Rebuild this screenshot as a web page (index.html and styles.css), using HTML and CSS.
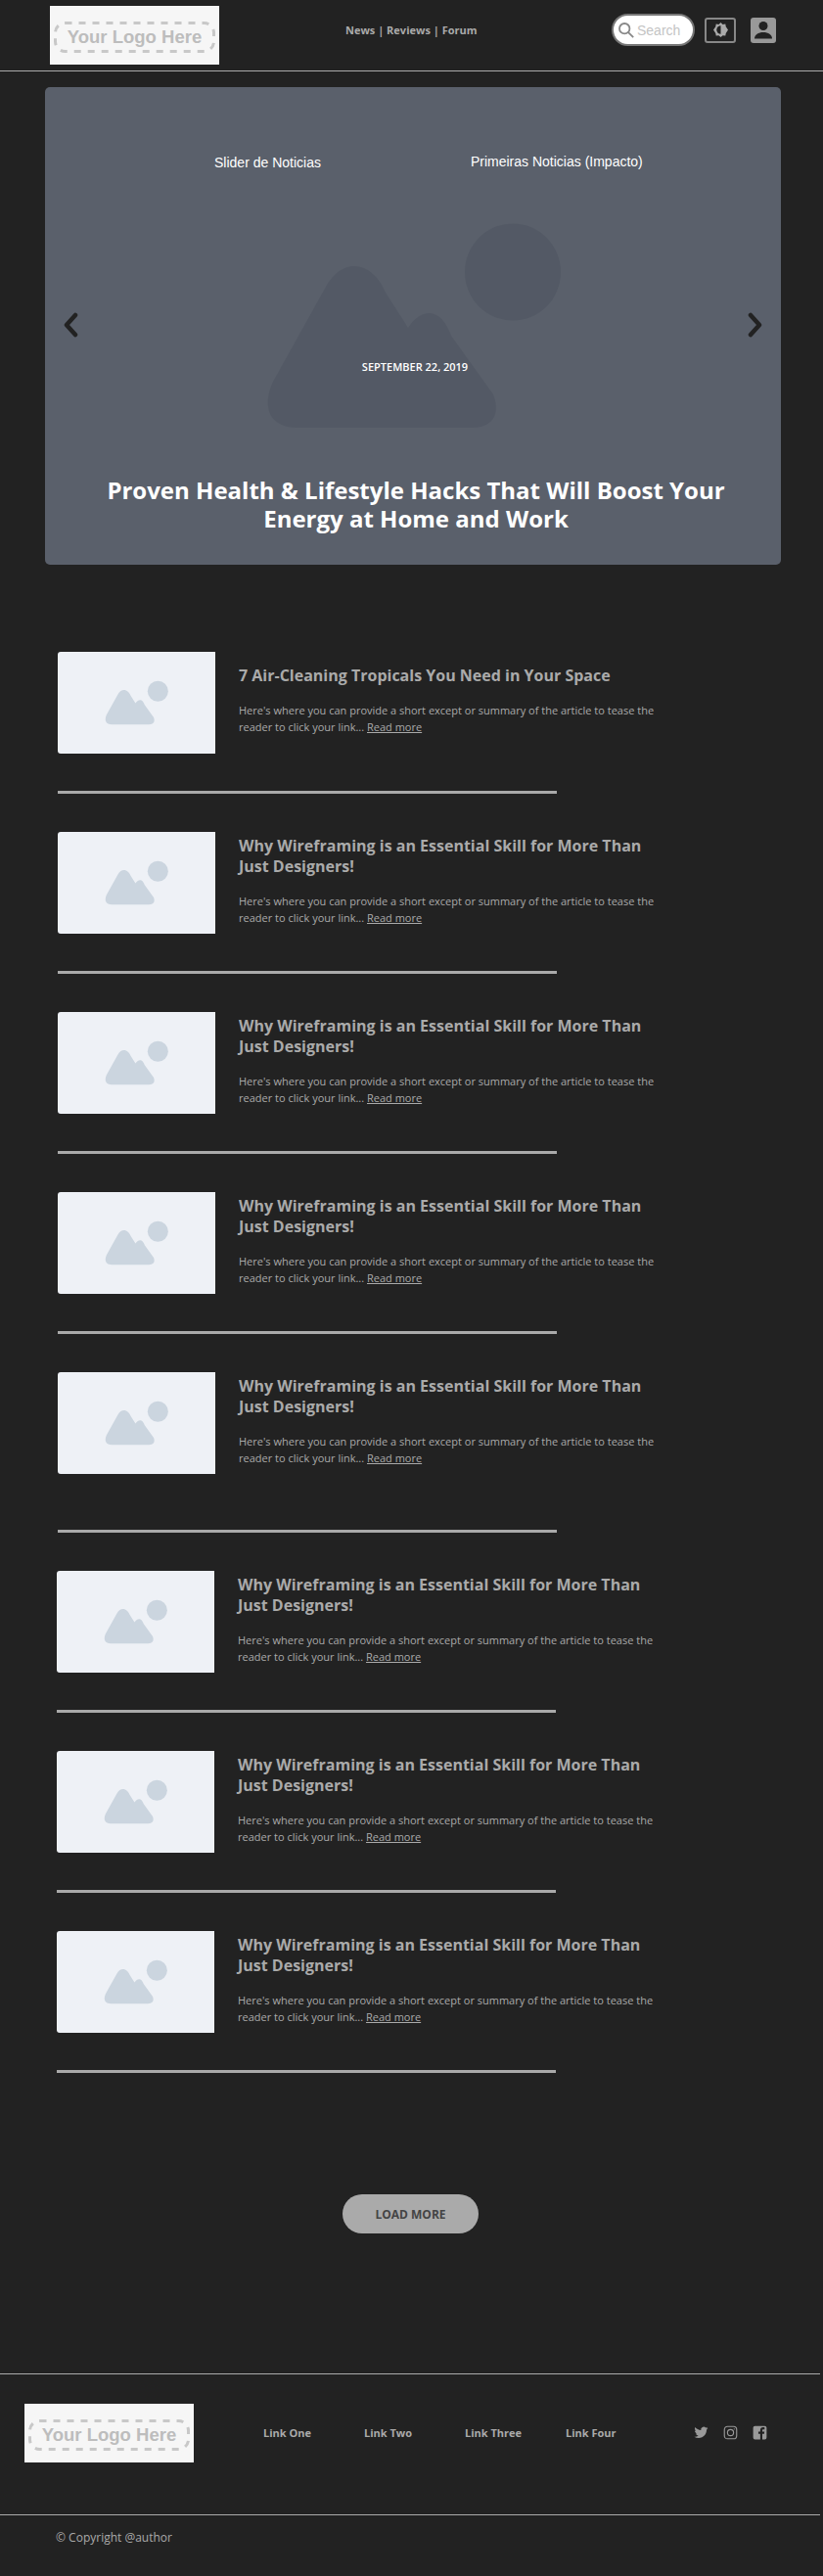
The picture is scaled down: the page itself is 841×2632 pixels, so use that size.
FILE: index.html
```html
<!DOCTYPE html>
<html lang="en">
<head>
    <meta charset="UTF-8">
    <meta name="viewport" content="width=device-width, initial-scale=1.0">
    <title>News</title>
    <link rel="stylesheet" href="styles.css">
</head>
<body>
    <svg class="defs">
        <symbol id="placeholder" viewBox="0 0 752 488" preserveAspectRatio="none">
            <ellipse cx="478" cy="189" rx="49" ry="49.5"></ellipse>
            <path d="M233 301L287 204C295 190 305 183 316 183C330 183 342 195 348 210L371 246C377 237 384 231 393 231C402 231 410 240 415 254L458 314C464 330 462 348 435 348L258 348C232 348 220 330 233 301Z"></path>
        </symbol>
        <symbol id="dashes" viewBox="0 0 165 32">
            <rect x="1.5" y="1.5" width="162" height="29" rx="10"></rect>
        </symbol>
    </svg>

    <header class="header">
        <div class="logo header-logo"><span class="logo-mark"><svg class="logo-dashes"><use href="#dashes"></use></svg>Your Logo Here</span></div>
        <nav class="nav"><a href="#">News</a> | <a href="#">Reviews</a> | <a href="#">Forum</a></nav>
        <div class="header-tools">
            <label class="search">
                <svg class="search-icon" viewBox="0 0 20 20"><circle cx="8" cy="8" r="5.8"></circle><path d="M12.3 12.3L18 18"></path></svg>
                <input type="text" placeholder="Search">
            </label>
            <button class="tool contrast" type="button">
                <svg viewBox="0 0 16 16"><path d="M8 0l2.2 2 2.9-.4.5 2.800L16 8l-2.400 3.600-.5 2.800-2.900-.4L8 16l-2.200-2-2.900.4-.5-2.800L0 8l2.400-3.600.5-2.800 2.900.4z"></path><path class="half" d="M8 3.500a4.500 4.500 0 0 0 0 9z"></path></svg>
            </button>
            <button class="tool user" type="button">
                <svg viewBox="0 0 26 26"><circle cx="13" cy="8.500" r="4.500"></circle><path d="M4 21.500c0-4 4-6.500 9-6.500s9 2.500 9 6.500z"></path></svg>
            </button>
        </div>
    </header>

    <section class="hero">
        <svg class="hero-image"><use href="#placeholder"></use></svg>
        <div class="hero-labels">
            <span class="hero-label">Slider de Noticias</span>
            <span class="hero-label hero-label-right">Primeiras Noticias (Impacto)</span>
        </div>
        <svg class="arrow arrow-left" viewBox="0 0 16 26"><path d="M13 3L4 13l9 10"></path></svg>
        <svg class="arrow arrow-right" viewBox="0 0 16 26"><path d="M3 3l9 10-9 10"></path></svg>
        <p class="hero-date">SEPTEMBER 22, 2019</p>
        <h1 class="hero-title">Proven Health &amp; Lifestyle Hacks That Will Boost Your Energy at Home and Work</h1>
    </section>

    <main class="posts">
        <div class="post-group">
            <article class="post">
                <svg class="thumb"><use href="#placeholder"></use></svg>
                <div class="post-body">
                    <h2>7 Air-Cleaning Tropicals You Need in Your Space</h2>
                    <p>Here's where you can provide a short except or summary of the article to tease the reader to click your link... <a href="#">Read more</a></p>
                </div>
            </article>
            <hr>
            <article class="post">
                <svg class="thumb"><use href="#placeholder"></use></svg>
                <div class="post-body">
                    <h2>Why Wireframing is an Essential Skill for More Than Just Designers!</h2>
                    <p>Here's where you can provide a short except or summary of the article to tease the reader to click your link... <a href="#">Read more</a></p>
                </div>
            </article>
            <hr>
            <article class="post">
                <svg class="thumb"><use href="#placeholder"></use></svg>
                <div class="post-body">
                    <h2>Why Wireframing is an Essential Skill for More Than Just Designers!</h2>
                    <p>Here's where you can provide a short except or summary of the article to tease the reader to click your link... <a href="#">Read more</a></p>
                </div>
            </article>
            <hr>
            <article class="post">
                <svg class="thumb"><use href="#placeholder"></use></svg>
                <div class="post-body">
                    <h2>Why Wireframing is an Essential Skill for More Than Just Designers!</h2>
                    <p>Here's where you can provide a short except or summary of the article to tease the reader to click your link... <a href="#">Read more</a></p>
                </div>
            </article>
            <hr>
            <article class="post">
                <svg class="thumb"><use href="#placeholder"></use></svg>
                <div class="post-body">
                    <h2>Why Wireframing is an Essential Skill for More Than Just Designers!</h2>
                    <p>Here's where you can provide a short except or summary of the article to tease the reader to click your link... <a href="#">Read more</a></p>
                </div>
            </article>
            <hr class="hr-tall">
        </div>
        <div class="post-group post-group-second">
            <article class="post">
                <svg class="thumb"><use href="#placeholder"></use></svg>
                <div class="post-body">
                    <h2>Why Wireframing is an Essential Skill for More Than Just Designers!</h2>
                    <p>Here's where you can provide a short except or summary of the article to tease the reader to click your link... <a href="#">Read more</a></p>
                </div>
            </article>
            <hr>
            <article class="post">
                <svg class="thumb"><use href="#placeholder"></use></svg>
                <div class="post-body">
                    <h2>Why Wireframing is an Essential Skill for More Than Just Designers!</h2>
                    <p>Here's where you can provide a short except or summary of the article to tease the reader to click your link... <a href="#">Read more</a></p>
                </div>
            </article>
            <hr>
            <article class="post">
                <svg class="thumb"><use href="#placeholder"></use></svg>
                <div class="post-body">
                    <h2>Why Wireframing is an Essential Skill for More Than Just Designers!</h2>
                    <p>Here's where you can provide a short except or summary of the article to tease the reader to click your link... <a href="#">Read more</a></p>
                </div>
            </article>
            <hr>
        </div>
    </main>

    <div class="load-more-row"><button class="load-more" type="button">LOAD MORE</button></div>

    <footer class="footer">
        <div class="footer-main">
            <div class="logo footer-logo"><span class="logo-mark"><svg class="logo-dashes"><use href="#dashes"></use></svg>Your Logo Here</span></div>
            <nav class="footer-links">
                <a href="#">Link One</a>
                <a href="#">Link Two</a>
                <a href="#">Link Three</a>
                <a href="#">Link Four</a>
            </nav>
            <div class="social">
                <svg viewBox="0 0 24 24"><path d="M23 4.600c-.8.400-1.700.6-2.600.7.900-.6 1.600-1.400 2-2.500-.9.500-1.900.9-2.900 1.100a4.600 4.600 0 0 0-7.800 4.200C7.900 7.900 4.500 6.100 2.200 3.300c-1.200 2.100-.6 4.800 1.400 6.100-.7 0-1.400-.2-2-.6 0 2.200 1.500 4.100 3.700 4.600-.7.200-1.400.2-2.100.1.600 1.800 2.300 3.100 4.300 3.200A9.300 9.300 0 0 1 .7 18.600 13 13 0 0 0 7.800 20.700c8.500 0 13.300-7.200 13-13.600.9-.6 1.700-1.400 2.200-2.500z"></path></svg>
                <svg class="instagram" viewBox="0 0 24 24"><rect x="2" y="2" width="20" height="20" rx="5"></rect><circle cx="12" cy="12" r="5"></circle><circle class="dot" cx="18" cy="6" r="1"></circle></svg>
                <svg viewBox="0 0 24 24"><path d="M4 1h16a3 3 0 0 1 3 3v16a3 3 0 0 1-3 3h-4v-9h3l.5-3.500H16V8.300c0-1 .4-1.700 1.800-1.700h1.900V3.500c-.5-.1-1.500-.2-2.600-.2-2.700 0-4.500 1.600-4.500 4.700v2.500H9.500V14h3.100v9H4a3 3 0 0 1-3-3V4a3 3 0 0 1 3-3z"></path></svg>
            </div>
        </div>
        <div class="copyright">© Copyright @author</div>
    </footer>
</body>
</html>
```

FILE: styles.css
```css
* {
    box-sizing: border-box;
}

body {
    margin: 0;
    background-color: #222;
    color: #aaa;
    font-family: "Open Sans", sans-serif;
}

a {
    color: inherit;
    text-decoration: none;
}

.defs {
    display: none;
}

.logo {
    width: 173px;
    height: 60px;
    padding: 16px 4px 12px;
    background: #f6f6f6;
}

.logo-mark {
    position: relative;
    display: flex;
    justify-content: center;
    align-items: center;
    height: 100%;
    color: #bdbdbd;
    font-family: "Liberation Sans", Arial, sans-serif;
    font-size: 18.500px;
    font-weight: 700;
    white-space: nowrap;
}

.logo-dashes {
    position: absolute;
    top: 0;
    left: 0;
    width: 100%;
    height: 100%;
    fill: none;
    stroke: #c8c8c8;
    stroke-width: 3;
    stroke-dasharray: 7 7;
}

.header {
    display: flex;
    align-items: flex-start;
    height: 73px;
    padding: 6px 48px 0 51px;
    border-bottom: 1px solid #aaa;
}

.nav {
    margin: 17px 0 0 129px;
    font-size: 11px;
    font-weight: 700;
    line-height: 15px;
    white-space: nowrap;
}

.header-tools {
    display: flex;
    align-items: center;
    margin: 8px 0 0 auto;
}

.search {
    display: flex;
    align-items: center;
    width: 85px;
    height: 33px;
    padding-left: 4px;
    background: #fff;
    border: 2px solid #777;
    border-radius: 17px;
}

.search-icon {
    flex: none;
    width: 18px;
    height: 18px;
    fill: none;
    stroke: #888;
    stroke-width: 2;
}

.search input {
    width: 52px;
    padding: 0 0 0 2px;
    border: none;
    outline: none;
    background: none;
    font-family: "Liberation Sans", Arial, sans-serif;
    font-size: 14px;
}

.search input::placeholder {
    color: #c4c4c4;
}

.tool {
    display: flex;
    justify-content: center;
    align-items: center;
    padding: 0;
    border-radius: 3px;
}

.contrast {
    width: 32px;
    height: 26px;
    margin-left: 10px;
    background: none;
    border: 2.500px solid #888;
}

.contrast svg {
    width: 15px;
    height: 15px;
    fill: #aaa;
}

.contrast .half {
    fill: #222;
}

.user {
    width: 26px;
    height: 26px;
    margin-left: 15px;
    background: #999;
    border: none;
}

.user svg {
    width: 26px;
    height: 26px;
    fill: #222;
}

.hero {
    position: relative;
    width: 752px;
    height: 488px;
    margin: 16px 0 0 46px;
    padding: 68px 0 0;
    background: #5a606b;
    border-radius: 5px;
    overflow: hidden;
    color: #fff;
    text-align: center;
}

.hero-image {
    position: absolute;
    top: 0;
    left: 0;
    width: 100%;
    height: 100%;
    fill: #535965;
}

.hero-labels {
    position: relative;
    display: flex;
    padding-left: 173px;
    font-family: "Liberation Sans", Arial, sans-serif;
    font-size: 14px;
    line-height: 16px;
}

.hero-label {
    margin-top: 1px;
}

.hero-label-right {
    margin: 0 0 0 153px;
}

.arrow {
    position: absolute;
    top: 230px;
    width: 16px;
    height: 26px;
    fill: none;
    stroke: #222;
    stroke-width: 4.500;
    stroke-linecap: round;
    stroke-linejoin: round;
}

.arrow-left {
    left: 18px;
}

.arrow-right {
    right: 18px;
}

.hero-date {
    position: relative;
    margin: 193px 0 0 4px;
    font-size: 11px;
    font-weight: 600;
    line-height: 16px;
}

.hero-title {
    position: relative;
    width: 680px;
    margin: 103px 0 0 39px;
    font-size: 24px;
    font-weight: 700;
    line-height: 29px;
}

.posts {
    margin: 89px 0 0;
}

.post-group {
    margin-left: 59px;
}

.post-group-second {
    margin-left: 58px;
}

.post {
    display: flex;
    align-items: center;
    gap: 24px;
    height: 104px;
}

.thumb {
    flex: none;
    width: 161px;
    height: 104px;
    background: #eef1f6;
    border-radius: 3px 0 0 3px;
    fill: #cbd5df;
}

.post-body {
    width: 428px;
    padding-bottom: 5px;
}

.post-body h2 {
    margin: 0 0 16px;
    font-size: 16px;
    font-weight: 700;
    line-height: 21px;
}

.post-body p {
    margin: 0;
    font-size: 11px;
    line-height: 17px;
}

.post-body a {
    text-decoration: underline;
}

hr {
    width: 510px;
    height: 3px;
    margin: 38px 0 39px;
    background: #aaa;
    border: none;
}

.hr-tall {
    margin-top: 57px;
}

.load-more-row {
    margin: 124px 0 0 350px;
}

.load-more {
    display: block;
    width: 139px;
    height: 40px;
    background: #aaa;
    border: none;
    border-radius: 20px;
    color: #444;
    font-family: "Open Sans", sans-serif;
    font-size: 12px;
    font-weight: 700;
}

.footer {
    width: 838px;
    margin-top: 143px;
    border-top: 1px solid #aaa;
}

.footer-main {
    display: flex;
    align-items: flex-start;
    height: 144px;
    padding: 30px 0 0 25px;
    border-bottom: 1px solid #aaa;
}

.footer-links {
    display: flex;
    margin: 22px 0 0 71px;
    font-size: 11px;
    font-weight: 700;
    line-height: 16px;
}

.footer-links a {
    width: 103px;
}

.footer-links a:last-child {
    width: auto;
}

.social {
    display: flex;
    gap: 15px;
    margin: 22px 0 0 auto;
    padding-right: 54px;
}

.social svg {
    width: 15px;
    height: 15px;
    fill: #999;
}

.social .instagram {
    fill: none;
    stroke: #999;
    stroke-width: 1.800;
}

.social .instagram .dot {
    fill: #999;
    stroke: none;
}

.copyright {
    padding: 15px 0 30px 57px;
    font-size: 12px;
    line-height: 16px;
}
```
